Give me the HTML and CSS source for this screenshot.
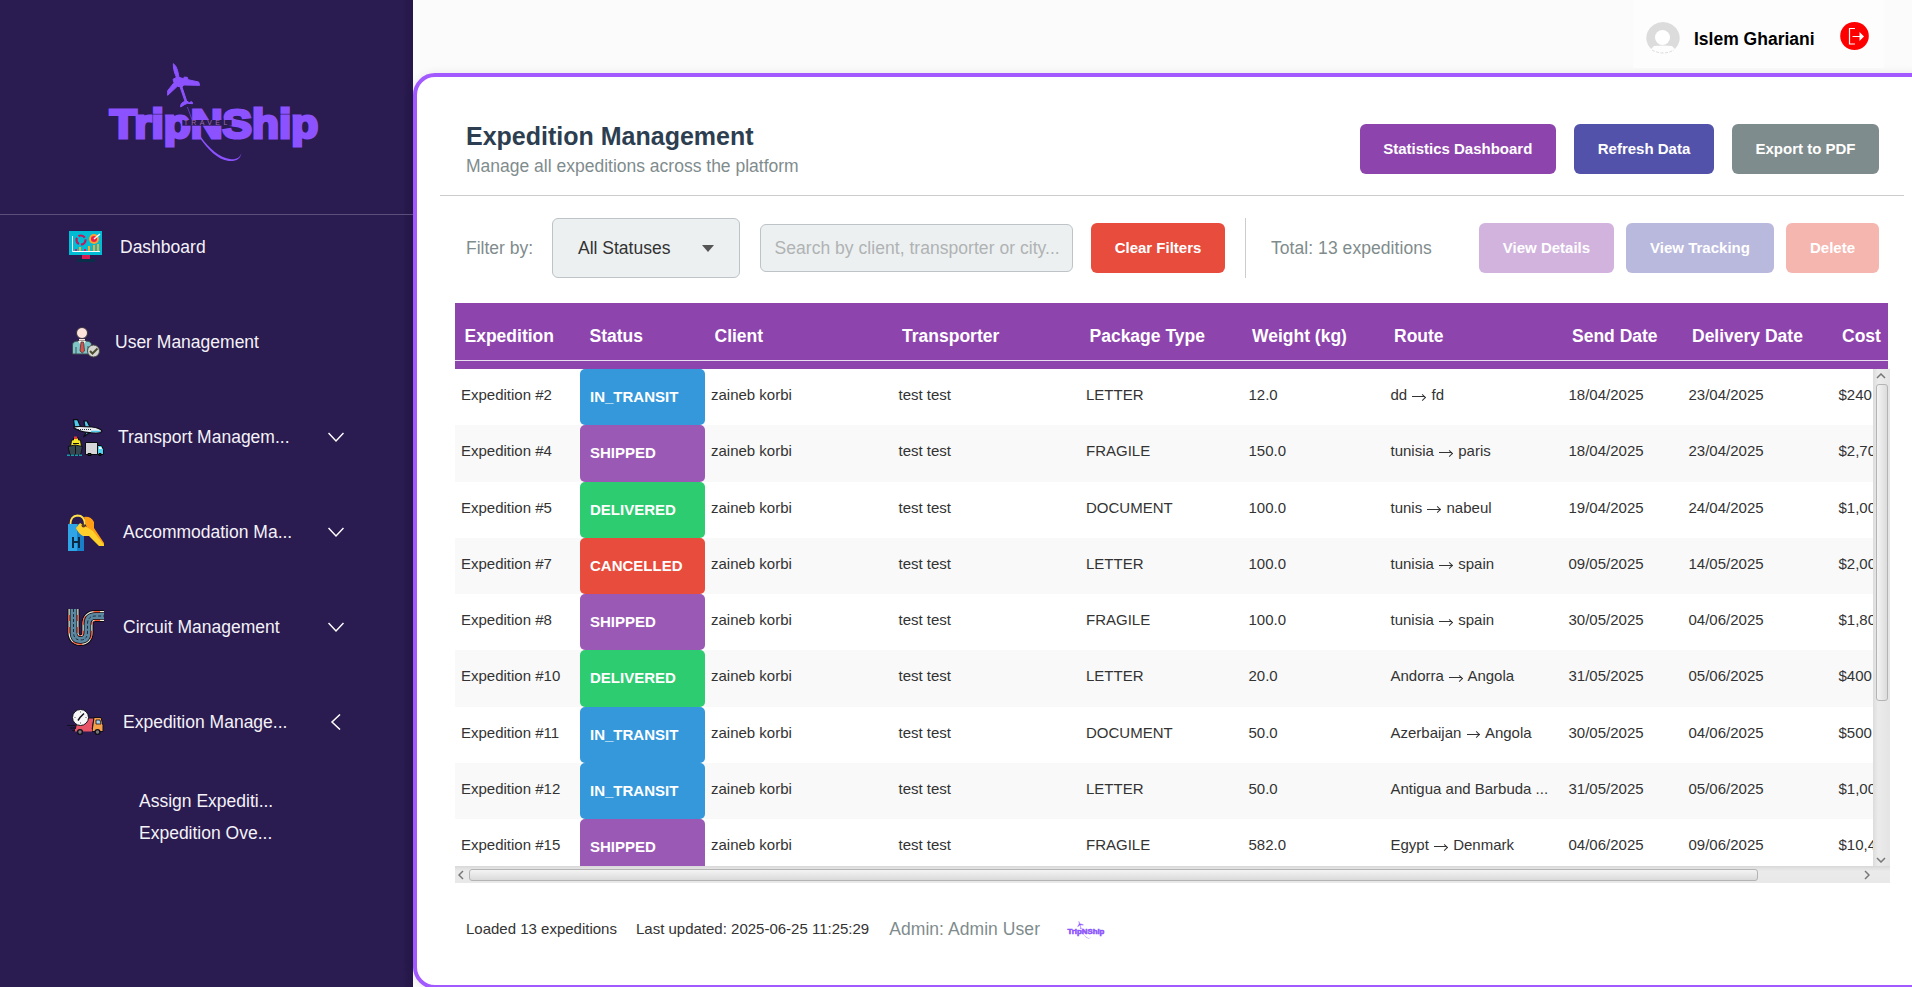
FILE: index.html
```html
<!DOCTYPE html>
<html lang="en">
<head>
<meta charset="utf-8">
<title>Expedition Management</title>
<link rel="stylesheet" href="styles.css">
</head>
<body>
<svg class="defs" width="0" height="0" aria-hidden="true">
  <symbol id="logo" viewBox="140 65 645 305">
    <text class="logo-word" x="148" y="293" textLength="626" lengthAdjust="spacingAndGlyphs">TripNShip</text>
    <rect class="logo-band" x="366" y="239" width="148" height="17"/>
    <path class="logo-plane" d="M339 70c9 6 14 20 17 41l13 4 3-5 9 1 2 7 32 7 3 10-48-1-5 6 14 42 8 5c6-5 10-4 10 3l-16-1-9 4-11 7c-1-9 4-14 13-17l-15-44-8-1-29 27 0-14 19-24-3-10 9-5 3 3c-8-17-12-32-11-45z"/>
    <path class="logo-trail" d="M381 200q8 20 14 38"/>
    <path d="M392 250q16 26 30 40c24 34 54 62 90 67 20 1 28-8 31-19-2 18-16 26-38 24-34-4-62-34-88-71q-17-20-25-41z"/>
    <text class="logo-sub" x="370" y="255" textLength="131">TRAVEL</text>
  </symbol>
</svg>
<div class="app">
  <aside class="sidebar">
    <div class="brand"><svg class="brand-logo"><use href="#logo"/></svg></div>
    <nav class="menu">
      <a class="item dash">
        <svg class="icon" viewBox="0 0 37 37"><path fill="#00bcd4" d="M2 2h33v24H2z"/><path fill="#d81b50" d="M15 26h8v4h-8z"/><path fill="#07304a" d="M10 30h18v3H10z"/><path stroke="#fff" fill="none" d="M5.500 7v15.500H33"/><circle cx="14" cy="11" r="4.500" fill="none" stroke="#c2185b" stroke-width="2.200" stroke-dasharray="7 2"/><path fill="#d81b60" d="M8 20h2v2H8zM17 20h2v2h-2z"/><path fill="#ffa726" d="M12 18h2v4h-2zM21 17h2v5h-2zM26 16h2v6h-2zM30 15h2v7h-2z"/><circle cx="27" cy="10" r="5" fill="#ff9f2d"/><circle cx="27" cy="10" r="3" fill="#e91e50"/><path stroke="#fff" stroke-width="1.400" d="M27 10l6-5"/></svg>
        <span>Dashboard</span></a>
      <a class="item user">
        <svg class="icon" viewBox="0 0 37 37"><circle cx="15" cy="9" r="5.500" fill="#fde3dc" stroke="#3a3440"/><path fill="#fde3dc" d="M12 15h6v3h-6z"/><path fill="#7fc4c9" stroke="#3f4a4d" d="M5.500 30V21q0-4 6-4h7q6 0 6 4v9z"/><path fill="#f5f0e8" d="M11 17h8l-4 6z"/><path fill="#d9534a" stroke="#4a3538" stroke-width=".8" d="M14 18h2.500l1 9-2.200 2-2.300-2z"/><path stroke="#40555a" d="M9 23v7M21 22v4"/><circle cx="26.500" cy="27" r="6" fill="#d6d6d0" stroke="#4a4a48"/><path d="M23 27l2.500 2.500 5-5" fill="none" stroke="#4c4c30" stroke-width="2"/></svg>
        <span>User Management</span></a>
      <a class="item transport">
        <svg class="icon" viewBox="0 0 37 37"><path fill="#4fc9ea" stroke="#0b0b14" stroke-width="1.200" d="M6.500 .6h4l3 7h-6zM17 2h3l3 6h-5zM20 12l-3.500 6 8-6z"/><path fill="#e8ecf0" stroke="#0b0b14" stroke-width="1.200" d="M7 8q2-1 18 0 8 1 10 4-1 2-6 2-14 0-22-5z"/><path d="M11 10.500h13" stroke="#26323b" stroke-dasharray="1 1"/><path stroke="#4fc9ea" stroke-width="1.500" d="M24 12.500h9"/><path fill="#f6e528" stroke="#111" d="M3.500 28l1-7h2v-2h5v2h2l1 7z"/><path fill="#e53935" d="M7 17.500h3V20H7z"/><path stroke="#111" d="M6 24.500h6"/><path fill="#37474f" stroke="#101018" d="M1 27.500l7-1.500 7.500 1.500-2 8.500H3z"/><path stroke="#101018" d="M8.500 27v9"/><path stroke="#189aab" stroke-width="1.400" stroke-dasharray="3 1" d="M0 36.300h16"/><path fill="#d6d6d8" stroke="#0b0b10" d="M18.500 23.500h12v12h-12z"/><path fill="#4fd0ee" stroke="#0b0b10" d="M30.500 26.500h4l2 4v5h-6z"/><path fill="#fff" d="M32 28h2l1 2h-3z"/><path fill="#24303a" stroke="#000" d="M21 34.500h3v2h-3zM32 34.500h2v2h-2z"/></svg>
        <span>Transport Managem...</span>
        <svg class="chev" viewBox="0 0 16 16"><path d="M.5 4l7.500 8 7.500-8"/></svg></a>
      <a class="item stay">
        <svg class="icon" viewBox="0 0 37 37"><path fill="#2fa4e7" d="M1 10h9v27H1z"/><path fill="#187fc8" d="M10 10h7v27h-7z"/><path fill="#0d2a44" d="M5 23h2v4h4v-4h2v11h-2v-5H7v5H5z"/><path fill="#ff9d14" d="M17 3q7-1 10 5v6l10 15v3l-5-1L20 15z"/><path fill="#ffd02c" d="M9 14l4-5 13 8 11 14v1h-5L22 22h-6q-5-3-7-8z"/><circle cx="16.500" cy="11.500" r="2" fill="#5b3d28"/><path fill="none" stroke="#ffe04a" stroke-width="1.800" d="M3.500 10q0-8 7-8.500 7 0 7.500 9"/></svg>
        <span>Accommodation Ma...</span>
        <svg class="chev" viewBox="0 0 16 16"><path d="M.5 4l7.500 8 7.500-8"/></svg></a>
      <a class="item circuit">
        <svg class="icon" viewBox="0 0 37 37"><g fill="none"><path stroke="#0b0b12" stroke-width="12" d="M6.500 0v23q0 8 7 8t7-8V15q0-8 8-8h9"/><path stroke="#f3eddc" stroke-width="10" d="M6.500 0v23q0 8 7 8t7-8V15q0-8 8-8h9"/><path stroke="#ff5a36" stroke-width="10" stroke-dasharray="6 6" stroke-dashoffset="6" d="M6.500 0v23q0 8 7 8t7-8V15q0-8 8-8h9"/><path stroke="#0b0b12" stroke-width="7.500" d="M6.500 0v23q0 8 7 8t7-8V15q0-8 8-8h9"/><path stroke="#5b87a0" stroke-width="6" d="M6.500 0v23q0 8 7 8t7-8V15q0-8 8-8h9"/><path stroke="#1c2c3c" stroke-width="1" stroke-dasharray="3 2" d="M6.500 0v23q0 8 7 8t7-8V15q0-8 8-8h9"/></g></svg>
        <span>Circuit Management</span>
        <svg class="chev" viewBox="0 0 16 16"><path d="M.5 4l7.500 8 7.500-8"/></svg></a>
      <a class="item exped">
        <svg class="icon" viewBox="0 0 37 37"><path fill="#e85466" stroke="#12101c" d="M8 26l3-12h16l-2 12z"/><path fill="#f6a04a" stroke="#12101c" d="M27 13.500h7l2 8v6H25z"/><path fill="#a9d3ee" stroke="#12101c" stroke-width=".8" d="M29 16h4l1 4h-5z"/><path fill="#e85466" d="M8 25h17v2.500H8z"/><circle cx="13.500" cy="13.500" r="8" fill="#f7f7f7" stroke="#12101c"/><path stroke="#12101c" stroke-width="1.500" fill="none" d="M17 9.500l-4 4-2 3"/><path stroke="#555" stroke-dasharray="1 10" d="M13.500 7.500v12M7.500 13.500h12"/><g fill="#777" stroke="#12101c" stroke-width="1.400"><circle cx="13" cy="28" r="2.400"/><circle cx="30.500" cy="28" r="2.400"/></g><path stroke="#12101c" d="M0 21.500h8M3 24h5M5 26.500h3"/></svg>
        <span>Expedition Manage...</span>
        <svg class="chev" viewBox="0 0 16 16"><path d="M12 .5L4 8l8 7.500"/></svg></a>
    </nav>
    <div class="submenu"><a>Assign Expediti...</a><a>Expedition Ove...</a></div>
  </aside>
  <div class="main">
    <header class="topbar">
      <div class="account">
        <svg class="avatar" viewBox="0 0 34 32"><path fill="#dcdcdc" d="M17 0a17 16 0 0 1 12 27l-3-3q-9-1-18 0l-3 3A17 16 0 0 1 17 0z"/><ellipse cx="16.500" cy="15.500" rx="7.500" ry="7.500" fill="#fff"/><path fill="none" stroke="#dcdcdc" stroke-dasharray="3 1.500" d="M6 28q11 6 22 0"/></svg>
        <span class="name">Islem Ghariani</span>
        <svg class="logout" viewBox="0 0 29 28"><ellipse cx="14.500" cy="14" rx="14.300" ry="14" fill="#f00"/><path fill="none" stroke="#fff" stroke-width="1.200" d="M15 6.500H9.500v15.500H15M12.500 14.500H23"/><path fill="#fff" d="M19.500 10l4.500 4.500-4.500 4.500z"/></svg>
      </div>
    </header>
    <section class="panel">
      <div class="head">
        <div><h1>Expedition Management</h1><p>Manage all expeditions across the platform</p></div>
        <div class="actions">
          <button class="btn w-stats purple">Statistics Dashboard</button>
          <button class="btn w-refresh indigo">Refresh Data</button>
          <button class="btn w-export gray">Export to PDF</button>
        </div>
      </div>
      <div class="filters">
        <span class="label">Filter by:</span>
        <div class="combo"><span>All Statuses</span><svg viewBox="0 0 12 7"><path d="M0 0h12L6 7z"/></svg></div>
        <div class="search">Search by client, transporter or city...</div>
        <button class="btn w-clear red">Clear Filters</button>
        <i class="vsep"></i>
        <span class="label total">Total: 13 expeditions</span>
        <div class="row-actions">
          <button class="btn w-details purple off">View Details</button>
          <button class="btn w-track indigo off">View Tracking</button>
          <button class="btn w-del red off">Delete</button>
        </div>
      </div>
      <div class="table">
        <div class="grid thead"><span>Expedition</span><span>Status</span><span>Client</span><span>Transporter</span><span>Package Type</span><span>Weight (kg)</span><span>Route</span><span>Send Date</span><span>Delivery Date</span><span>Cost</span></div>
        <div class="body">
          <div class="rows">
            <div class="grid row"><span>Expedition #2</span><b class="transit">IN_TRANSIT</b><span>zaineb korbi</span><span>test test</span><span>LETTER</span><span>12.0</span><span>dd <i class="arr"></i> fd</span><span>18/04/2025</span><span>23/04/2025</span><span>$240</span></div>
            <div class="grid row"><span>Expedition #4</span><b class="shipped">SHIPPED</b><span>zaineb korbi</span><span>test test</span><span>FRAGILE</span><span>150.0</span><span>tunisia <i class="arr"></i> paris</span><span>18/04/2025</span><span>23/04/2025</span><span>$2,700</span></div>
            <div class="grid row"><span>Expedition #5</span><b class="delivered">DELIVERED</b><span>zaineb korbi</span><span>test test</span><span>DOCUMENT</span><span>100.0</span><span>tunis <i class="arr"></i> nabeul</span><span>19/04/2025</span><span>24/04/2025</span><span>$1,000</span></div>
            <div class="grid row"><span>Expedition #7</span><b class="cancelled">CANCELLED</b><span>zaineb korbi</span><span>test test</span><span>LETTER</span><span>100.0</span><span>tunisia <i class="arr"></i> spain</span><span>09/05/2025</span><span>14/05/2025</span><span>$2,000</span></div>
            <div class="grid row"><span>Expedition #8</span><b class="shipped">SHIPPED</b><span>zaineb korbi</span><span>test test</span><span>FRAGILE</span><span>100.0</span><span>tunisia <i class="arr"></i> spain</span><span>30/05/2025</span><span>04/06/2025</span><span>$1,800</span></div>
            <div class="grid row"><span>Expedition #10</span><b class="delivered">DELIVERED</b><span>zaineb korbi</span><span>test test</span><span>LETTER</span><span>20.0</span><span>Andorra <i class="arr"></i> Angola</span><span>31/05/2025</span><span>05/06/2025</span><span>$400</span></div>
            <div class="grid row"><span>Expedition #11</span><b class="transit">IN_TRANSIT</b><span>zaineb korbi</span><span>test test</span><span>DOCUMENT</span><span>50.0</span><span>Azerbaijan <i class="arr"></i> Angola</span><span>30/05/2025</span><span>04/06/2025</span><span>$500</span></div>
            <div class="grid row"><span>Expedition #12</span><b class="transit">IN_TRANSIT</b><span>zaineb korbi</span><span>test test</span><span>LETTER</span><span>50.0</span><span>Antigua and Barbuda ...</span><span>31/05/2025</span><span>05/06/2025</span><span>$1,000</span></div>
            <div class="grid row"><span>Expedition #15</span><b class="shipped">SHIPPED</b><span>zaineb korbi</span><span>test test</span><span>FRAGILE</span><span>582.0</span><span>Egypt <i class="arr"></i> Denmark</span><span>04/06/2025</span><span>09/06/2025</span><span>$10,4</span></div>
          </div>
          <div class="vbar"><svg viewBox="0 0 10 6"><path d="M1 5l4-4 4 4"/></svg><i class="thumb"></i><svg viewBox="0 0 10 6"><path d="M1 1l4 4 4-4"/></svg></div>
        </div>
        <div class="hbar"><svg viewBox="0 0 6 10"><path d="M5 1L1 5l4 4"/></svg><i class="thumb"></i><svg viewBox="0 0 6 10"><path d="M1 1l4 4-4 4"/></svg></div>
      </div>
      <footer class="status"><span>Loaded 13 expeditions</span><span>Last updated: 2025-06-25 11:25:29</span><span class="admin">Admin: Admin User</span><svg class="mini-logo"><use href="#logo"/></svg></footer>
    </section>
  </div>
</div>
</body>
</html>
```
FILE: styles.css
```css
* { box-sizing: border-box; }
body { margin: 0; font-family: "Liberation Sans", Arial, sans-serif; font-size: 17.5px; line-height: 20px; overflow: hidden; }
.defs { position: absolute; }
.app { display: flex; width: 1912px; height: 987px; overflow: hidden; }

.sidebar { width: 413px; flex: none; background: linear-gradient(90deg, transparent 403px, rgba(20, 10, 45, .25)) #2a1b50; color: #f4f2f8; }
.brand { height: 215px; padding: 61.700px 0 0 106.700px; border-bottom: 1px solid #5c4f7c; }
.brand-logo { display: block; width: 215px; height: 101.700px; fill: #8c52ff; --band: #2a1b50; --sub: #9a6bb0; }
.logo-word { font: bold 122px "Liberation Sans", Arial, sans-serif; stroke: #8c52ff; stroke-width: 9px; }
.logo-band { fill: var(--band); }
.logo-plane { stroke: #8c52ff; stroke-width: 3px; }
.logo-sub { font: 21px "Liberation Sans", Arial, sans-serif; fill: var(--sub); }
.logo-trail { fill: none; stroke: #8c52ff; stroke-width: 2.500px; opacity: .7; }
.item { display: flex; align-items: center; height: 95px; padding: 0 69px 0 67px; }
.menu { margin-top: -15.500px; }
.item span { flex: 1; white-space: nowrap; }
.icon { width: 37px; height: 37px; flex: none; margin-right: 19px; }
.dash .icon { margin-right: 16px; }
.user .icon { margin-right: 11px; }
.transport .icon { margin-right: 14px; }
.chev { width: 16px; height: 16px; fill: none; stroke: #fff; stroke-width: 1.500px; }
.submenu { display: flex; flex-direction: column; gap: 12px; padding: 21.500px 0 0 139px; }

.main { flex: 1; min-width: 0; background: #fbfbfb; }
.topbar { height: 73px; display: flex; justify-content: flex-end; padding-right: 28px; }
.account { width: 251px; height: 68px; background: #fdfdfd; display: flex; padding: 22px 15px 0 13px; }
.avatar { width: 34px; height: 32px; margin-right: 14px; }
.name { flex: 1; font-weight: bold; color: #000; padding-top: 7px; white-space: nowrap; }
.logout { width: 29px; height: 28px; }

.panel { width: 1520px; height: 916px; background: #fff; border: 4px solid #a259ff; border-radius: 22px; padding: 0 0 0 23px; box-shadow: 0 0 10px rgba(0, 0, 0, .08); }
.head { width: 1464px; height: 119px; border-bottom: 1px solid #ccc; display: flex; justify-content: space-between; padding: 44px 25px 0 26px; }
h1 { margin: 0; font-size: 25px; line-height: 30px; color: #2c3e50; }
p { margin: 5px 0 0; color: #7f8c8d; }
.actions { display: flex; gap: 18px; padding-top: 3px; }
.btn { height: 50px; border: 0; border-radius: 6px; padding: 0 0 2px; color: #fff; font: bold 15px "Liberation Sans", Arial, sans-serif; white-space: nowrap; flex: none; }
.purple { background: #8e44ad; }
.indigo { background: #5352ab; }
.gray { background: #7f8c8d; }
.red { background: #e84c3d; }
.off { opacity: .4; }
.w-stats { width: 196.500px; }
.w-refresh { width: 140px; }
.w-export { width: 147px; }
.w-clear { width: 134px; }
.w-details { width: 135px; }
.w-track { width: 148px; }
.w-del { width: 93px; }
.filters { width: 1464px; height: 104px; display: flex; align-items: center; padding: 0 25px 0 26px; }
.label { color: #7f8c8d; white-space: nowrap; width: 86px; flex: none; }
.combo { width: 188px; height: 60px; margin-right: 19.500px; background: #ecf0f1; border: 1px solid #bdc3c7; border-radius: 6px; display: flex; align-items: center; justify-content: space-between; padding: 0 25px; color: #333; flex: none; }
.combo svg { width: 12px; height: 7px; fill: #555; }
.search { width: 313px; height: 48px; margin-right: 18.500px; background: #ecf0f1; border: 1px solid #bdc3c7; border-radius: 6px; padding: 13px 14px; color: #b0b3b4; white-space: nowrap; flex: none; letter-spacing: .04px; }
.vsep { width: 1px; height: 60px; background: #ccc; margin: 0 25px 0 20px; }
.total { flex: 1; letter-spacing: .06px; }
.row-actions { display: flex; gap: 12px; }

.table { width: 1435.500px; margin: 3px 0 0 14.500px; }
.grid { display: grid; grid-template-columns: 125px 125px 187.500px 187.500px 162.500px 142px 178px 120px 150px 60px; }
.thead { width: 1433.500px; height: 66px; overflow: hidden; color: #fff; font-weight: bold; background: linear-gradient(#8e44ad 57px, #e9ddf0 57px, #e9ddf0 58px, #8e44ad 58px); }
.thead span { padding: 22.500px 0 0 10px; white-space: nowrap; }
.body { display: flex; height: 497px; }
.rows { width: 1418px; overflow: hidden; font-size: 15px; line-height: 18px; color: #333; }
.row { height: 56.250px; }
.row:nth-child(even) { background: #f9f9f9; }
.row span { padding: 17px 0 0 6.500px; white-space: nowrap; }
.row b { padding: 19px 0 0 10.500px; color: #fff; border-radius: 5px; }
.transit { background: #3498db; }
.shipped { background: #9b59b6; }
.delivered { background: #2ecc71; }
.cancelled { background: #e84c3d; }
.arr { display: inline-block; width: 15px; height: 7px; background: linear-gradient(#333, #333) 1px 3px / 13px 1px no-repeat; position: relative; margin-right: 1px; }
.arr::after { content: ""; position: absolute; right: 1.500px; top: 1.500px; width: 4px; height: 4px; border: solid #333; border-width: 1px 1px 0 0; transform: rotate(45deg); }
.vbar { width: 17.500px; background: linear-gradient(90deg, #dcdcdc, #ebebeb 30%, #e4e4e4); display: flex; flex-direction: column; align-items: center; justify-content: space-between; padding: 4px 0 3px; }
.vbar svg { width: 10px; height: 6px; }
.hbar svg { width: 6px; height: 10px; }
.vbar svg, .hbar svg { fill: none; stroke: #777; stroke-width: 1.500px; }
.thumb { border: 1px solid #b4b4b4; border-radius: 3px; flex: none; }
.vbar .thumb { width: 12px; height: 317px; margin: 5px 0 auto 1px; background: linear-gradient(90deg, #f4f4f4, #dcdcdc); }
.hbar { height: 17px; background: linear-gradient(#d8d8d8, #ebebeb 30%, #e8e8e8); display: flex; align-items: center; padding: 0 20px 0 3px; }
.hbar .thumb { width: 1289px; height: 12px; margin: 1px auto 0 5.500px; background: linear-gradient(#f4f4f4, #dadada); }
.status { display: flex; align-items: center; padding: 36px 0 0 26px; font-size: 15px; color: #333; white-space: nowrap; }
.status span { margin-right: 19px; }
.status .admin { font-size: 17.500px; color: #7f8c8d; margin: 0 26.500px 0 1px; letter-spacing: .06px; }
.mini-logo { width: 38px; height: 18px; margin-top: 1px; fill: #8c52ff; --band: transparent; --sub: #9a6bb0; }
```
